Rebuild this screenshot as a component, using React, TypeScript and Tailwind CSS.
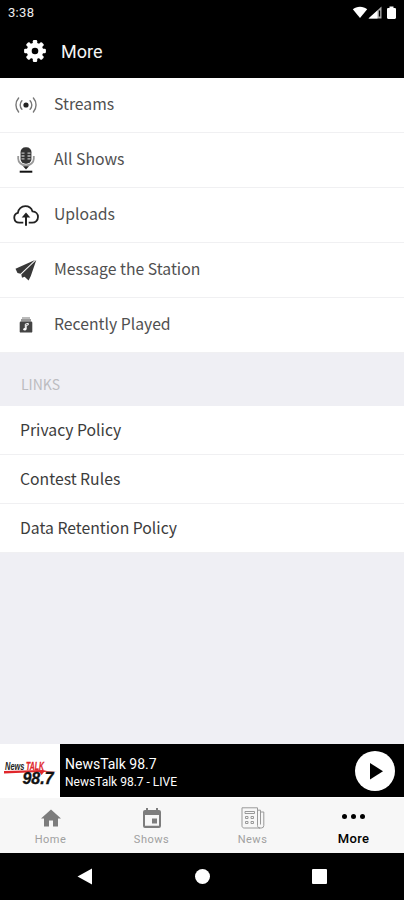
import type { ReactNode } from 'react'

const sans = "font-['Noto_Sans_CJK_SC',sans-serif]"
const teeth = [0, 45, 90, 135, 180, 225, 270, 315]

function GearIcon() {
  return (
    <svg width="22" height="22" viewBox="-11 -11 22 22">
      <g fill="#fff">
        <circle r="8.3" />
        {teeth.map((angle) => (
          <rect key={angle} x="-2.2" y="-10.9" width="4.4" height="5" rx="1.2" transform={`rotate(${angle})`} />
        ))}
      </g>
      <circle r="3.3" fill="#000" />
    </svg>
  )
}

function StreamsIcon() {
  return (
    <svg width="22" height="18" viewBox="0 0 22 18" fill="none" stroke="#777" strokeWidth="1.4" strokeLinecap="round">
      <circle cx="11" cy="9" r="2.6" fill="#222" stroke="none" />
      <path d="M6.9 4.800a6 6 0 0 0 0 8.400M15.100 4.800a6 6 0 0 1 0 8.400" />
      <path d="M3.600 2a10.600 10.600 0 0 0 0 14M18.400 2a10.600 10.600 0 0 1 0 14" />
    </svg>
  )
}

function MicIcon() {
  return (
    <svg width="18" height="26" viewBox="0 0 18 26" fill="none">
      <rect x="3.500" y="0.300" width="11" height="16.500" rx="5" fill="#333" />
      <path d="M3.500 5.500v7M14.500 5.500v7" stroke="#aaa" strokeWidth="1" />
      <path d="M4.500 6.200h3M4.500 9h3M4.500 11.800h3M10.500 6.200h3M10.500 9h3M10.500 11.800h3" stroke="#bbb" strokeWidth="1.300" />
      <path d="M1.200 9v2.700a7.800 6.800 0 0 0 15.600 0V9" stroke="#999" strokeWidth="1.800" />
      <path d="M6 19.300h6L9 22.600z" fill="#222" />
      <path d="M2.700 24.700h12.600" stroke="#111" strokeWidth="2" />
    </svg>
  )
}

function CloudIcon() {
  return (
    <svg width="26" height="21" viewBox="0 0 26 21" fill="none" stroke="#222" strokeWidth="1.8">
      <path d="M10.300 17.700H6.200a5 5 0 0 1-1.300-9.800C5.100 4 8.500 1.200 12.300 1.200c3.400 0 6.200 2 7.200 5.200 3.200.2 5.500 2.700 5.500 5.600 0 3.200-2.500 5.700-5.800 5.700h-3.500" />
      <path d="M13 20.800V9" strokeWidth="2" />
      <path d="M13 7.500l4.300 5H8.700z" fill="#222" stroke="none" />
    </svg>
  )
}

function PlaneIcon() {
  return (
    <svg width="22" height="22" viewBox="0 0 22 22" fill="#383838">
      <path d="M20 1 .5 9.800l2 4.200 3 .8z" />
      <path d="M21.300 1 6.300 15.400l.7 3.300 2.600-.9 4 3.700 2.200-4.500z" />
    </svg>
  )
}

function RecentIcon() {
  return (
    <svg width="14" height="18" viewBox="0 0 14 18">
      <path d="M3 1h8v2H3z" fill="#bbb" />
      <path d="M2 3h10v2.600H2z" fill="#999" />
      <rect x="0.700" y="5.600" width="12.600" height="11" rx="1.200" fill="#444" />
      <path d="M6.300 12.800V8.100l3-.7v1.500l-2.100.5v3.700" fill="none" stroke="#fff" />
      <ellipse cx="5.800" cy="13.300" rx="1.500" ry="1.200" fill="#fff" />
    </svg>
  )
}

function HomeIcon() {
  return (
    <svg width="20" height="18" viewBox="0 0 20 18" fill="#7d7d7d">
      <path d="M8 17.500v-6h4v6h5V9.500h3L10 .5 0 9.500h3v8z" />
    </svg>
  )
}

function CalendarIcon() {
  return (
    <svg width="18" height="20" viewBox="0 0 18 20" fill="#7d7d7d">
      <path
        fillRule="evenodd"
        d="M3 0h2v2h8V0h2v2h1a2 2 0 0 1 2 2v14a2 2 0 0 1-2 2H2a2 2 0 0 1-2-2V4a2 2 0 0 1 2-2h1zM2 7v10.800h14V7z"
      />
      <path d="M9 10.500h5v5H9z" />
    </svg>
  )
}

function NewspaperIcon() {
  return (
    <svg width="24" height="22" viewBox="0 0 24 22" fill="none" stroke="#999">
      <path d="M1 .8h15.500v17.700c0 1.500.9 2.500 2.400 2.500H3.200C1.900 21 1 20.100 1 18.800z" />
      <path d="M16.500 3.200h3v14.300M19.500 5h3.300v13.500a2.500 2.500 0 0 1-2.500 2.500h-2" />
      <path d="M4 4.500h9.500v2H4zM4.500 9.500h2.500v2H4.500zM10 9.500h2.500v2H10zM4.500 14.500h2.500v2H4.500zM10 14.500h2.500v2H10z" />
    </svg>
  )
}

function StationLogo() {
  return (
    <svg width="60" height="53" viewBox="0 0 60 53" className="shrink-0 bg-white">
      <g fontFamily="Liberation Sans, sans-serif" fontWeight="700" fontStyle="italic">
        <text x="5" y="25.500" fontSize="10.500" textLength="19.500" lengthAdjust="spacingAndGlyphs" fill="#222">
          News
        </text>
        <text x="26" y="25.500" fontSize="10.500" textLength="18" lengthAdjust="spacingAndGlyphs" fill="#e0262b" stroke="#e0262b" strokeWidth=".3">
          TALK
        </text>
        <path d="M4 27 43 26l4 1h10l-13 1-2.500 3-2-3L4 29.500z" fill="#e0262b" />
        <text x="22.500" y="40" fontSize="17" textLength="31" lengthAdjust="spacingAndGlyphs" fill="#111" stroke="#111" strokeWidth=".4">
          98.7
        </text>
      </g>
    </svg>
  )
}

const menu = [
  { label: 'Streams', icon: <StreamsIcon /> },
  { label: 'All Shows', icon: <MicIcon /> },
  { label: 'Uploads', icon: <CloudIcon /> },
  { label: 'Message the Station', icon: <PlaneIcon /> },
  { label: 'Recently Played', icon: <RecentIcon /> },
]

const links = ['Privacy Policy', 'Contest Rules', 'Data Retention Policy']

function Tab({ icon, label, active }: { icon: ReactNode; label: string; active?: boolean }) {
  return (
    <div className="flex flex-1 flex-col items-center pt-2">
      <div className="flex h-6 items-center justify-center">{icon}</div>
      <span
        className={
          active
            ? 'mt-0.5 text-[13px] leading-[14px] font-medium tracking-[0.3px] text-black'
            : 'mt-[3px] text-[11px] leading-[14px] tracking-[0.5px] text-[#a0a0a0]'
        }
      >
        {label}
      </span>
    </div>
  )
}

export default function App() {
  return (
    <div className="flex h-[900px] w-full flex-col overflow-hidden bg-[#efeff4] font-[Roboto,sans-serif]">
      <header className="h-[78px] shrink-0 bg-black text-white">
        <div className="flex h-[26px] items-center justify-between pr-[6px] pl-2">
          <span className="text-[13px] tracking-[0.3px] text-[#eee]">3:38</span>
          <svg width="46" height="14" viewBox="0 0 46 14" fill="#fff" className="-mt-px">
            <path d="M.8 3.200C4.500-.2 11.500-.2 15.200 3.200L8 12z" />
            <path d="M29.500.500V12.500H16.500z" fill="#aaa" />
            <path d="M25.500 4.500v8h-9z" />
            <path d="M27.500 4.500v6" stroke="#000" strokeWidth="1.300" />
            <path d="M37.500.500h4V2h1.200c.7 0 1.300.500 1.300 1.200v8.600c0 .7-.6 1.200-1.300 1.200h-6.400c-.7 0-1.300-.5-1.300-1.200V3.200c0-.7.6-1.200 1.300-1.200h1.200z" />
          </svg>
        </div>
        <div className="flex h-[50px] items-center pl-6">
          <GearIcon />
          <h1 className="mt-0.5 ml-[15px] text-lg text-[#f5f5f5]">More</h1>
        </div>
      </header>

      <ul className="shrink-0 bg-white">
        {menu.map((item) => (
          <li key={item.label} className="flex h-[55px] items-center border-b border-[#f0f0f2]">
            <div className="flex w-[52px] justify-center">{item.icon}</div>
            <span className={`${sans} ml-0.5 pb-[3px] text-[15.75px] text-[#505050]`}>{item.label}</span>
          </li>
        ))}
      </ul>

      <h2 className={`${sans} flex h-[53px] shrink-0 items-center pt-2 pl-[21px] text-sm text-[#bcbcc0]`}>LINKS</h2>

      <ul className="shrink-0 bg-white">
        {links.map((link) => (
          <li key={link} className="flex h-[49px] items-center border-b border-[#f0f0f2]">
            <span className={`${sans} pl-5 text-[15.75px] text-[#3c3c3c]`}>{link}</span>
          </li>
        ))}
      </ul>

      <div className="mt-auto flex h-[53px] shrink-0 items-center bg-black text-white">
        <StationLogo />
        <div className="ml-[5px] flex-1 pt-1">
          <p className="text-sm leading-[18px]">NewsTalk 98.7</p>
          <p className="text-xs leading-[18px]">NewsTalk 98.7 - LIVE</p>
        </div>
        <svg width="40" height="40" viewBox="0 0 40 40" className="mr-[9px]">
          <circle cx="20" cy="20" r="20" fill="#fff" />
          <path d="M15 12v16.500l13-8.250z" fill="#000" />
        </svg>
      </div>

      <nav className="flex h-14 shrink-0 border-t border-white bg-[#f7f7f7]">
        <Tab icon={<HomeIcon />} label="Home" />
        <Tab icon={<CalendarIcon />} label="Shows" />
        <Tab icon={<NewspaperIcon />} label="News" />
        <Tab
          active
          label="More"
          icon={
            <div className="mb-1 flex gap-1">
              <i className="size-[5px] rounded-full bg-black" />
              <i className="size-[5px] rounded-full bg-black" />
              <i className="size-[5px] rounded-full bg-black" />
            </div>
          }
        />
      </nav>

      <div className="flex h-[47px] shrink-0 items-center bg-black pl-[77px]">
        <svg width="15" height="17" viewBox="0 0 15 17" fill="#fff">
          <path d="M15 .5v16L.5 8.500z" />
        </svg>
        <div className="ml-[103px] size-[15px] rounded-full bg-white" />
        <div className="ml-[102px] size-[15px] rounded-[1px] bg-white" />
      </div>
    </div>
  )
}
